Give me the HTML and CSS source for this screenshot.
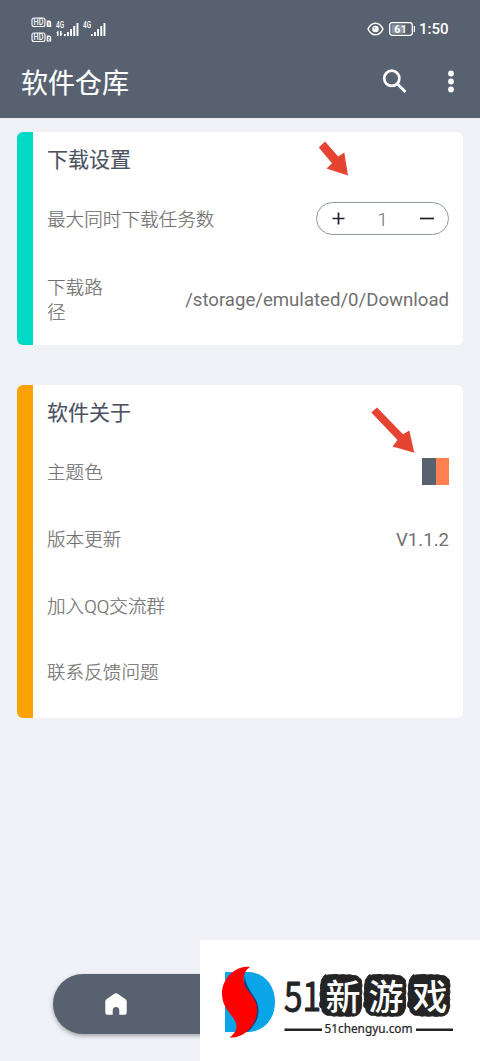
FILE: index.html
```html
<!DOCTYPE html>
<html lang="zh-CN">
<head>
<meta charset="utf-8">
<meta name="viewport" content="width=device-width, initial-scale=1">
<title>软件仓库</title>
<link rel="stylesheet" href="styles.css">
</head>
<body>
<div class="screen">
  <header class="header">
    <div class="status">
      <svg class="signals" width="78" height="26" viewBox="0 0 78 26">
        <g fill="none" stroke="#fff" stroke-width="1.1"><rect x="1" y="1" width="13" height="8.500" rx="2"/><rect x="1" y="16" width="13" height="8.500" rx="2"/></g>
        <g fill="#fff" class="signal-text">
          <text x="2.600" y="8.200" font-size="8.500" textLength="9.800" lengthAdjust="spacingAndGlyphs">HD</text>
          <text x="2.600" y="23.200" font-size="8.500" textLength="9.800" lengthAdjust="spacingAndGlyphs">HD</text>
          <text x="25" y="11" font-size="9" textLength="8" lengthAdjust="spacingAndGlyphs">4G</text>
          <text x="52" y="11" font-size="9" textLength="8" lengthAdjust="spacingAndGlyphs">4G</text>
        </g>
        <path fill="#fff" d="M15.700 3.500h3l1.500 1.500V10h-4.500zM15.700 18.500h3l1.500 1.500v4.500h-4.500z"/>
        <path stroke="#576170" stroke-width=".8" fill="none" d="M17.300 5.800h.7v3M17.200 20.500h1.500v1.300h-1.500v1.300h1.500"/>
        <g fill="#fff">
          <path d="M27.500 13.500V19h-1.500v-3.300H25zM29 14h1.500v2.800l1.200-.5-1.700 2.700H29z"/>
          <path d="M33 17h1.700v2H33zM36 15h1.900v4H36zM39.100 12h1.900v7h-1.900zM42.300 9h1.900v10h-1.900zM45.500 6h1.900v13h-1.900z"/>
          <path d="M60 17h1.700v2H60zM63 15h1.900v4H63zM66.100 12h1.900v7h-1.900zM69.300 9h1.900v10h-1.900zM72.500 6h1.900v13h-1.900z"/>
        </g>
      </svg>
      <div class="status-right">
        <svg width="17" height="14" viewBox="0 0 17 14" fill="none" stroke="#fff">
          <path stroke-width="1.500" d="M1 7C4.800-.8 12.200-.8 16 7 12.200 14.800 4.800 14.800 1 7z"/>
          <circle cx="8.500" cy="7" r="3.300" fill="#fff" stroke="none"/><circle cx="7.600" cy="6" r=".8" fill="#576170" stroke="none"/>
        </svg>
        <svg width="27" height="14" viewBox="0 0 27 14">
          <rect x=".7" y=".7" width="22.600" height="12.600" rx="2.500" fill="none" stroke="#fff" stroke-width="1.300"/>
          <rect x="2.500" y="2.500" width="11.500" height="9" fill="#8c94a0"/>
          <path fill="#fff" d="M24.800 4H26v6h-1.200z"/>
          <text class="battery-text" x="5.300" y="10.800" fill="#fff" font-size="10.500" textLength="12.500">61</text>
        </svg>
        <span class="clock">1:50</span>
      </div>
    </div>
    <div class="toolbar">
      <h1 class="title">软件仓库</h1>
      <svg class="search" width="26" height="26" viewBox="0 0 26 26" fill="none" stroke="#fff" stroke-width="2.700"><circle cx="9.800" cy="9.300" r="7.600"/><path d="M15.200 14.700l8.300 8.300"/></svg>
      <svg class="more" width="8" height="24" viewBox="0 0 8 24" fill="#fff"><circle cx="4" cy="3.500" r="2.900"/><circle cx="4" cy="11.500" r="2.900"/><circle cx="4" cy="19.500" r="2.900"/></svg>
    </div>
  </header>

  <main class="content">
    <section class="card card-download">
      <h2 class="card-title">下载设置</h2>
      <div class="row">
        <span class="label">最大同时下载任务数</span>
        <div class="stepper">
          <svg width="13" height="13" viewBox="0 0 13 13" stroke="#20222b" stroke-width="1.700"><path d="M.5 6.500h12M6.500.5v12"/></svg>
          <span class="count">1</span>
          <svg width="14" height="13" viewBox="0 0 14 13" stroke="#20222b" stroke-width="1.700"><path d="M0 6.500h14"/></svg>
        </div>
      </div>
      <div class="row row-path">
        <span class="label path-label">下载路径</span>
        <span class="value">/storage/emulated/0/Download</span>
      </div>
    </section>

    <section class="card card-about">
      <h2 class="card-title">软件关于</h2>
      <div class="row"><span class="label">主题色</span><span class="swatch"></span></div>
      <div class="row"><span class="label">版本更新</span><span class="value">V1.1.2</span></div>
      <div class="row"><span class="label">加入QQ交流群</span></div>
      <div class="row"><span class="label">联系反馈问题</span></div>
    </section>
  </main>

  <nav class="navbar">
    <svg width="22" height="22" viewBox="0 0 22 22"><path fill="#fff" d="M9.700.6q1.300-.8 2.600 0l8.200 5.600q1.200.9 1.200 2.300V19.500q0 2.200-2.200 2.200H14.300V17.500q0-3.500-3.300-3.500t-3.300 3.500v4.200H2.500Q.3 21.700.3 19.500V8.500q0-1.400 1.200-2.300z"/></svg>
  </nav>

  <svg class="arrow arrow-stepper" width="31" height="36" viewBox="0 0 31 36"><path fill="#e64433" d="M.8 6.500L7 .5l13.200 15L26.300 11.500 30 34.500 8.500 27.500l5.500-5.200z"/></svg>
  <svg class="arrow arrow-theme" width="44" height="46" viewBox="0 0 44 46"><path fill="#e64433" d="M.3 5.500L6 .5 32 27.300 38.300 23.500 43.300 45.800 21.500 39.500l5-6.500z"/></svg>

  <aside class="watermark">
    <svg width="280" height="121" viewBox="0 0 280 121">
      <path fill="#09a5e6" d="M25 32h22C64 32 75 45 75 62S64 92 47 92H25z"/>
      <path fill="#173e80" d="M45 33C44 50 58 55 58.500 70 58.800 80 53 87 47.500 92L40 88z"/>
      <path fill="#f00" d="M50 27C37 25 22 37 22 54 22 70 36 76 36.500 86 36.800 91 33 95 29.500 97.500 43 99 57 86 57 70 57 55 44 52 43.500 40 43.300 34 46 29.500 50 27z"/>
      <path fill="none" stroke="#242424" stroke-width="2.400" d="M84.500 89.700H122M216 89.700h37"/>
      <g fill="#242424" stroke="#242424" stroke-width="1" stroke-linejoin="round">
        <path id="tile" d="M126 35.500q3-1 6-.7 4-1 7 .3 4-1 7 0 4-1 7 .5 4-.5 6 2 3 2 2.500 5 1 3 0 6 1 4-.3 7 1 4 .2 7 1 4-.5 7-1 4-3.500 5.500-3 1.500-6 .9-4 1-7-.2-4 1-7 0-4 1-7-.5-4 .5-6-1.500-3-2-2.500-5-3-2-2.200-5.500 1.500-3 .7-6-1-3.500.3-7-.8-4 .3-7 0-4 2-5.500 .5-2 3-3.300z"/>
        <use href="#tile" x="44"/>
        <use href="#tile" x="88"/>
      </g>
      <text class="logo-number" x="84" y="71" textLength="37" lengthAdjust="spacingAndGlyphs">51</text>
      <text class="logo-name" y="70" x="125.500 168.500 212.500">新游戏</text>
      <text class="logo-url" x="124.500" y="93" textLength="88" lengthAdjust="spacingAndGlyphs">51chengyu.com</text>
    </svg>
  </aside>
</div>
</body>
</html>
```
FILE: styles.css
```css
* { box-sizing: border-box; }
body { margin: 0; font-family: Roboto, "Noto Sans CJK SC", sans-serif; }
svg { display: block; flex: none; }
.screen {
  position: relative;
  display: flex;
  flex-direction: column;
  height: 1061px;
  overflow: hidden;
  background: #eff1f6;
}
.header { height: 118px; background: #576170; color: #fff; }
.status {
  display: flex;
  align-items: center;
  justify-content: space-between;
  height: 58px;
  padding: 0 31px;
}
.signals { margin-top: 1px; }
.signal-text { font-family: Roboto, sans-serif; font-weight: 500; }
.status-right { display: flex; align-items: center; gap: 5px; }
.battery-text { font-family: Roboto, sans-serif; font-weight: 700; }
.clock { font-size: 15px; font-weight: 500; line-height: 18px; width: 30px; margin-left: -2px; }
.toolbar { display: flex; align-items: center; height: 48px; padding: 0 25px 0 21px; }
.title {
  margin: 0;
  padding-top: 3px;
  font-size: 27px;
  font-weight: 400;
  line-height: 40px;
  -webkit-text-stroke: .15px #fff;
}
.search { margin-left: auto; margin-right: 39px; }
.content {
  display: flex;
  flex-direction: column;
  gap: 40px;
  padding: 14px 17.5px 0 17px;
}
.card {
  padding: 0 13.5px 0 14px;
  background: #fff;
  border-left: 16px solid;
  border-radius: 6px;
}
.card-download { height: 213px; border-left-color: #00d9c5; }
.card-about { height: 333px; border-left-color: #faa300; }
.card-title {
  margin: 0;
  height: 54px;
  padding-top: 1px;
  color: #4b5362;
  font-size: 21px;
  font-weight: 400;
  line-height: 55px;
  -webkit-text-stroke: .15px #4b5362;
}
.row {
  display: flex;
  align-items: center;
  justify-content: space-between;
  height: 66.7px;
  color: #707070;
  font-size: 18.6px;
  line-height: 25px;
}
.label { padding-top: 3px; font-weight: 300; -webkit-text-stroke: .2px #707070; }
.value { padding-top: 2px; }
.row-path { height: 93px; }
.path-label { width: 58px; }
.stepper {
  display: flex;
  align-items: center;
  justify-content: space-between;
  width: 133px;
  height: 33px;
  margin-top: -1px;
  padding: 0 14px 0 15px;
  border: 1px solid #8b9a9b;
  border-radius: 17px;
}
.count { font-size: 19px; font-weight: 300; padding-top: 1px; }
.swatch {
  width: 27px;
  height: 27px;
  margin-top: -1px;
  background: linear-gradient(90deg, #576170 50%, #ff7f50 50%);
}
.navbar {
  display: flex;
  align-items: center;
  width: 374px;
  height: 60px;
  margin: auto auto 27px;
  padding-left: 52px;
  border-radius: 30px;
  background: #576170;
  box-shadow: 0 2px 4px rgba(0, 0, 0, .32);
}
.arrow { position: absolute; }
.arrow-stepper { left: 318px; top: 141px; }
.arrow-theme { left: 371px; top: 407px; }
.watermark {
  position: absolute;
  right: 0;
  bottom: 0;
  width: 280px;
  height: 121px;
  background: #fff;
}
.logo-number { fill: #242424; font: 400 40px "Noto Sans CJK SC", sans-serif; stroke: #242424; stroke-width: 1; stroke-linejoin: round; }
.logo-name { fill: #fff; font: 500 35px "Noto Sans CJK SC", sans-serif; }
.logo-url { fill: #242424; font: 400 12px "Noto Sans", sans-serif; stroke: #242424; stroke-width: .2; }
```
